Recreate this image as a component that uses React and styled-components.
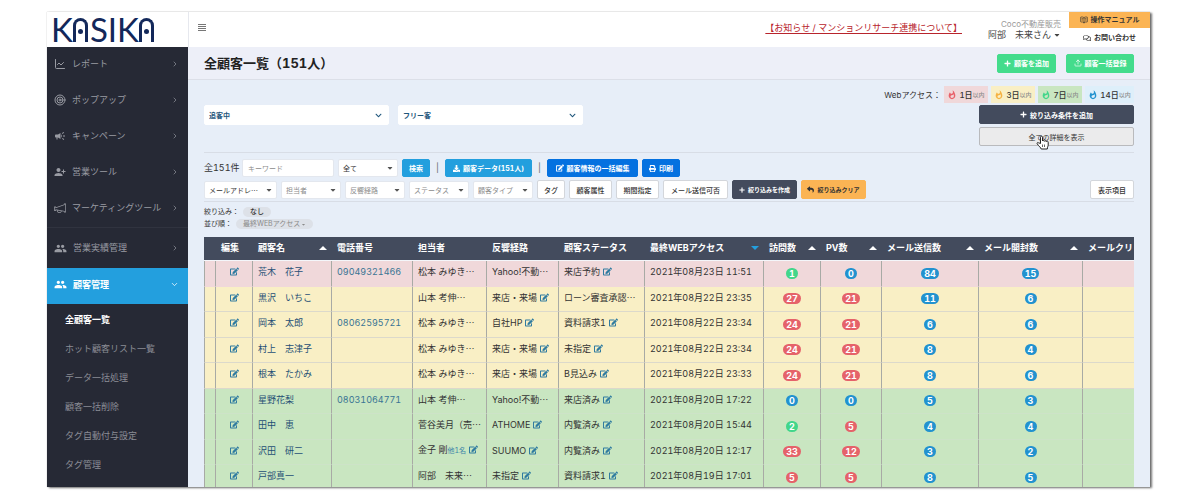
import React from 'react';
import styled, { createGlobalStyle } from 'styled-components';
import {
  FaCaretDown, FaChevronDown, FaDownload, FaEdit, FaPlus,
  FaPrint, FaRegComments, FaReply,
} from 'react-icons/fa';
import { FiChevronDown, FiChevronRight, FiUpload } from 'react-icons/fi';
import { MdCampaign, MdPeople, MdPersonAddAlt1, MdWhatshot } from 'react-icons/md';
import { TfiAnnouncement } from 'react-icons/tfi';
import { BookOpenText, ChartLine, Target } from 'lucide-react';

const GlobalStyle = createGlobalStyle`
  * {
    box-sizing: border-box;
  }
  body {
    margin: 0;
    background: #fff;
    color: #333;
    font-family: Inter, 'Noto Sans CJK JP', sans-serif;
    font-size: 9px;
    font-variant-numeric: tabular-nums;
    line-height: 12px;
  }
  button, input, select {
    font-family: inherit;
    font-variant-numeric: inherit;
    margin: 0;
  }
  a {
    color: inherit;
    text-decoration: none;
  }
  svg {
    flex-shrink: 0;
  }
`;

const Page = styled.div`
  padding: 12px 50px 13px 47px;
`;

const Frame = styled.div`
  display: flex;
  height: calc(100vh - 25px);
  background: #e7eef8;
  box-shadow: 0 0 1px rgba(0, 0, 0, 0.3), 2px 1px 2px rgba(0, 0, 0, 0.55);
`;

const Sidebar = styled.aside`
  width: 141px;
  flex-shrink: 0;
  background: #262935;
`;

const Logo = styled.a`
  display: flex;
  align-items: center;
  height: 35px;
  padding-left: 4px;
  background: #fff;
  color: #13285a;
  font-family: Lato, sans-serif;
  font-size: 33px;
  line-height: 35px;
`;

const Arch = styled.span`
  display: flex;
  justify-content: center;
  align-items: center;
  width: 15px;
  height: 24px;
  margin-right: 2px;
  border: 3px solid #13285a;
  border-bottom: 0;
  border-radius: 8px 8px 0 0;
  &:after {
    content: '';
    width: 5px;
    height: 5px;
    border-radius: 50%;
    background: #13285a;
  }
`;

const NavItem = styled.a`
  display: flex;
  align-items: center;
  gap: 6px;
  height: ${p => p.$tall ? 40 : 36}px;
  padding: 0 9px ${p => p.$tall ? 0 : 3}px 7px;
  background: ${p => p.$active ? '#239fde' : 'transparent'};
  color: ${p => p.$active ? '#fff' : '#999ba3'};
  font-weight: ${p => p.$active ? 700 : 400};
  span {
    flex: 1;
  }
`;

const NavGroup = styled.nav`
  & + & {
    border-top: 1px solid #30333f;
  }
`;

const SubMenu = styled.div`
  padding-top: 1px;
`;

const SubItem = styled.a`
  display: flex;
  align-items: center;
  height: 29px;
  padding-left: 18px;
  color: ${p => p.$current ? '#fff' : '#8b8d96'};
  font-weight: ${p => p.$current ? 700 : 400};
`;

const Main = styled.main`
  flex: 1;
  min-width: 0;
  overflow: hidden;
`;

const TopBar = styled.header`
  display: flex;
  align-items: center;
  height: 35px;
  padding-left: 9px;
  background: #fff;
  border-left: 1px solid #e6e8ee;
`;

const MenuButton = styled.button`
  display: flex;
  padding: 0 0 4px;
  border: 0;
  background: transparent;
`;

const Notice = styled.a`
  margin: 0 26px 0 auto;
  padding-bottom: 4px;
  color: #b8242c;
  text-decoration: underline;
  text-underline-offset: 2px;
`;

const Account = styled.div`
  margin-right: 8px;
  color: #444;
  text-align: right;
  small {
    display: block;
    color: #999;
    font-size: 8px;
    line-height: 10px;
  }
  div {
    display: flex;
    align-items: center;
    gap: 2px;
  }
`;

const HelpLinks = styled.div`
  display: flex;
  flex-direction: column;
  width: 81px;
  height: 35px;
`;

const HelpLink = styled.a`
  display: flex;
  justify-content: center;
  align-items: center;
  gap: 3px;
  height: ${p => p.$filled ? 16 : 19}px;
  background: ${p => p.$filled ? '#fbb454' : 'transparent'};
  font-size: 7px;
  font-weight: 700;
`;

const TitleBar = styled.div`
  display: flex;
  align-items: center;
  gap: 10px;
  height: 33px;
  padding: 0 16px;
  background: #edeff8;
  border-bottom: 1px solid #dcdfe8;
  h1 {
    flex: 1;
    margin: 0;
    color: #222;
    font-size: 13px;
    line-height: 18px;
  }
`;

const tones = {
  green: '#44dc8c',
  sky: '#239fde',
  blue: '#0471e0',
  navy: '#434b5d',
  orange: '#fbb454',
  gray: '#ebebec',
  white: '#fff',
};
const darkText = ['orange', 'gray', 'white'];
const borders = { gray: '#b9babd', white: '#d3d6db' };

const Button = styled.button`
  display: flex;
  position: relative;
  justify-content: center;
  align-items: center;
  gap: 3px;
  width: ${p => p.$width ? `${p.$width}px` : 'auto'};
  height: 19px;
  padding: 0;
  border: 1px solid ${p => borders[p.$tone] || tones[p.$tone]};
  border-radius: 2px;
  background: ${p => tones[p.$tone]};
  color: ${p => darkText.includes(p.$tone) ? '#333' : '#fff'};
  font-size: ${p => p.$small ? 6 : 7}px;
  font-weight: ${p => p.$tone === 'gray' ? 400 : p.$tone === 'white' ? 500 : 700};
  white-space: nowrap;
`;

const Content = styled.div`
  padding: 6px 16px 0;
`;

const AccessRow = styled.div`
  display: flex;
  justify-content: flex-end;
  align-items: center;
  gap: 3px;
  height: 17px;
  font-size: 8px;
`;

const AccessTag = styled.span`
  display: flex;
  align-items: center;
  justify-content: center;
  width: ${p => p.$wide ? 49 : 44}px;
  height: 17px;
  background: ${p => p.$bg};
  font-weight: 500;
  svg {
    margin-right: 2px;
    color: ${p => p.$color};
  }
  small {
    color: #8c8c8c;
    font-size: 6px;
  }
`;

const Conditions = styled.div`
  display: flex;
  gap: 9px;
  padding: 2px 0 6px;
  border-bottom: 1px solid #d8dde6;
`;

const Actions = styled.div`
  display: grid;
  gap: 3px;
  width: 155px;
  margin-left: auto;
`;

const SelectBox = styled.div`
  display: grid;
  align-items: center;
  width: ${p => p.$width}px;
  height: ${p => p.$large ? 20 : 18}px;
  background: #fff;
  border: 1px solid ${p => p.$large ? '#fff' : '#e3e7ee'};
  border-radius: 2px;
  color: ${p => p.$large ? '#1f567c' : p.$muted ? '#8b8b8b' : '#333'};
  select {
    grid-area: 1 / 1;
    width: 100%;
    height: 100%;
    padding: 0 4px;
    appearance: none;
    border: 0;
    background: transparent;
    color: inherit;
    font-family: 'Noto Sans CJK JP', sans-serif;
    font-size: 7px;
    font-weight: ${p => p.$large ? 700 : 400};
  }
  svg {
    grid-area: 1 / 1;
    justify-self: end;
    margin-right: ${p => p.$large ? 6 : 3}px;
    color: ${p => p.$large ? '#1f567c' : '#555'};
    pointer-events: none;
  }
`;

const Tools = styled.div`
  display: grid;
  gap: 3px;
  padding: 6px 0 2px;
  border-bottom: 1px solid #d8dde6;
`;

const ToolRow = styled.div`
  display: flex;
  align-items: center;
  gap: 4px;
  ${Button} {
    height: ${p => p.$short ? 18 : 19}px;
  }
  ${Button}:last-child {
    margin-left: ${p => p.$pushLast ? 'auto' : 0};
  }
`;

const Count = styled.span`
  width: 34px;
  white-space: nowrap;
`;

const Keyword = styled.input`
  width: 92px;
  height: 18px;
  padding: 0 5px;
  border: 1px solid #e3e7ee;
  border-radius: 2px;
  background: #fff;
  font-size: 7px;
  &::placeholder {
    color: #8b8b8b;
  }
`;

const Bar = styled.span`
  width: 7px;
  color: #666;
  text-align: center;
`;

const Summary = styled.dl`
  margin: 0;
  padding: 4px 0 7px;
  font-size: 7px;
  div {
    display: flex;
    align-items: center;
    gap: 4px;
    height: 12px;
  }
`;

const Pill = styled.dd`
  display: flex;
  align-items: center;
  gap: 1px;
  height: 10px;
  margin: 0;
  padding: 0 7px;
  border-radius: 5px;
  background: #dde1e8;
  color: ${p => p.$muted ? '#8b8b8b' : '#333'};
  font-weight: ${p => p.$muted ? 400 : 500};
`;

const TableWrap = styled.div`
  overflow: hidden;
`;

const Table = styled.table`
  width: 100%;
  min-width: 980px;
  table-layout: fixed;
  border-collapse: separate;
  border-spacing: 0;
`;

const Th = styled.th`
  height: 24px;
  padding: 0 5px 2px;
  border-bottom: 1px solid #f4f6fa;
  background: #434b5d;
  color: #fff;
  text-align: left;
  white-space: nowrap;
  div {
    display: flex;
    justify-content: space-between;
    align-items: center;
  }
`;

const Sort = styled.i`
  border: 4px solid transparent;
  border-top-width: ${p => p.$down ? 4 : 0}px;
  border-bottom-width: ${p => p.$down ? 0 : 4}px;
  border-top-color: #239fde;
  border-bottom-color: #fff;
`;

const rowColors = { pink: '#f0d8da', yellow: '#f9efc5', green: '#c9e6c1' };
const lineColors = { pink: '#f0d8da', yellow: '#dcd9cb', green: '#cde3c8' };

const Tr = styled.tr`
  background: ${p => rowColors[p.$tone]};
  td {
    height: 25px;
    border-bottom: 1px solid ${p => lineColors[p.$tone]};
  }
  &:nth-child(odd) td {
    height: 26px;
  }
`;

const Td = styled.td`
  padding: 0 0 3px 5px;
  border-right: 1px solid #a8aaa5;
  white-space: nowrap;
  &:first-child {
    border-left: 1px solid #a8aaa5;
  }
`;

const CenterTd = styled(Td)`
  padding: 0;
  text-align: center;
`;

const EditTd = styled(Td)`
  padding: 0 3px 3px 0;
  text-align: center;
`;

const EditLink = styled.a`
  margin-left: 3px;
  color: #2f7ba0;
  svg {
    vertical-align: -1px;
  }
`;

const RecordLink = styled.a`
  color: ${p => p.$phone ? '#3a7594' : '#1f4f75'};
`;

const Dots = styled.span`
  font-family: 'Noto Sans CJK JP', sans-serif;
`;

const Others = styled.small`
  color: #3a85a8;
  font-size: 7px;
`;

const badgeColors = { green: '#42d68b', blue: '#2292cf', red: '#e5626a' };

const Badge = styled.span`
  display: inline-block;
  min-width: 12px;
  height: 11px;
  padding: 0 3px;
  border-radius: 6px;
  background: ${p => badgeColors[p.$color]};
  color: #fff;
  font-weight: 700;
  line-height: 11px;
`;

// Hand pointer hovering over the details button
const Pointer = styled.svg`
  position: absolute;
  top: 7px;
  left: 56px;
`;

const navItems = [
  [ChartLine, 'レポート'],
  [Target, 'ポップアップ'],
  [MdCampaign, 'キャンペーン'],
  [MdPersonAddAlt1, '営業ツール'],
  [TfiAnnouncement, 'マーケティングツール'],
];

const subItems = ['全顧客一覧', 'ホット顧客リスト一覧', 'データ一括処理', '顧客一括削除', 'タグ自動付与設定', 'タグ管理'];

const accessTags = [
  ['1日', '#f0d8da', '#e8616a'],
  ['3日', '#f9efc5', '#f6b243'],
  ['7日', '#c9e6c1', '#42d68b'],
  ['14日', '#deeffa', '#2292cf'],
];

const columns = [
  { width: 12 },
  { width: 37, label: '編集' },
  { width: 79, label: '顧客名', sort: 'up' },
  { width: 81, label: '電話番号' },
  { width: 74, label: '担当者' },
  { width: 72, label: '反響経路' },
  { width: 86, label: '顧客ステータス' },
  { width: 119, label: '最終WEBアクセス', sort: 'down' },
  { width: 57, label: '訪問数', sort: 'up' },
  { width: 61, label: 'PV数', sort: 'up' },
  { width: 97, label: 'メール送信数', sort: 'up' },
  { width: 104, label: 'メール開封数', sort: 'up' },
  { label: 'メールクリック数' },
];

const customers = [
  { tone: 'pink', name: '荒木　花子', phone: '09049321466', staff: '松本 みゆき…', route: 'Yahoo!不動…', status: '来店予約', date: '2021年08月23日 11:51', visits: 1, pv: 0, sent: 84, opened: 15 },
  { tone: 'yellow', name: '黒沢　いちこ', staff: '山本 考伸…', route: '来店・来場', status: 'ローン審査承認…', date: '2021年08月22日 23:35', visits: 27, pv: 21, sent: 11, opened: 6 },
  { tone: 'yellow', name: '岡本　太郎', phone: '08062595721', staff: '松本 みゆき…', route: '自社HP', status: '資料請求1', date: '2021年08月22日 23:34', visits: 24, pv: 21, sent: 6, opened: 6 },
  { tone: 'yellow', name: '村上　志津子', staff: '松本 みゆき…', route: '来店・来場', status: '未指定', date: '2021年08月22日 23:34', visits: 24, pv: 21, sent: 8, opened: 4 },
  { tone: 'yellow', name: '根本　たかみ', staff: '松本 みゆき…', route: '来店・来場', status: 'B見込み', date: '2021年08月22日 23:33', visits: 24, pv: 21, sent: 8, opened: 6 },
  { tone: 'green', name: '星野花梨', phone: '08031064771', staff: '山本 考伸…', route: 'Yahoo!不動…', status: '来店済み', date: '2021年08月20日 17:22', visits: 0, pv: 0, sent: 5, opened: 3 },
  { tone: 'green', name: '田中　恵', staff: '菅谷美月（売…', route: 'ATHOME', status: '内覧済み', date: '2021年08月20日 15:44', visits: 2, pv: 5, sent: 4, opened: 4 },
  { tone: 'green', name: '沢田　研二', staff: '金子 剛', others: '他1名', route: 'SUUMO', status: '内覧済み', date: '2021年08月20日 12:17', visits: 33, pv: 12, sent: 3, opened: 2 },
  { tone: 'green', name: '戸部真一', staff: '阿部　未来…', route: '未指定', status: '資料請求1', date: '2021年08月19日 17:01', visits: 5, pv: 5, sent: 8, opened: 5 },
];

const countColor = n => {
  if (n === 0) return 'blue';
  return n < 5 ? 'green' : 'red';
};

function Edit({ label }) {
  return <EditLink href="#edit" aria-label={`${label}を編集`}><FaEdit size={9} /></EditLink>;
}

function Clipped({ text }) {
  return text.endsWith('…') ? <>{text.slice(0, -1)}<Dots>…</Dots></> : text;
}

function Select({ label, value, width, large, muted }) {
  return (
    <SelectBox $width={width} $large={large} $muted={muted}>
      <select aria-label={label} defaultValue={value}>
        <option>{value}</option>
      </select>
      {large ? <FaChevronDown size={7} /> : <FaCaretDown size={8} />}
    </SelectBox>
  );
}

function SideMenu() {
  return (
    <Sidebar>
      <Logo href="#top" aria-label="KASIKA">K<Arch />SIK<Arch /></Logo>
      <NavGroup>
        {navItems.map(([Icon, label]) => (
          <NavItem key={label} href="#nav">
            <Icon size={12} />
            <span>{label}</span>
            <FiChevronRight size={8} />
          </NavItem>
        ))}
      </NavGroup>
      <NavGroup>
        <NavItem href="#results" $tall>
          <MdPeople size={13} />
          <span>営業実績管理</span>
          <FiChevronRight size={8} />
        </NavItem>
        <NavItem href="#customers" $active>
          <MdPeople size={13} />
          <span>顧客管理</span>
          <FiChevronDown size={9} />
        </NavItem>
        <SubMenu>
          {subItems.map((label, i) => (
            <SubItem key={label} href="#sub" $current={i === 0}>{label}</SubItem>
          ))}
        </SubMenu>
      </NavGroup>
    </Sidebar>
  );
}

function Header() {
  return (
    <TopBar>
      <MenuButton aria-label="メニュー">
        <svg width="8" height="7" stroke="#777">
          <path d="M0 .5h8M0 2.5h8M0 4.5h8M0 6.5h8" />
        </svg>
      </MenuButton>
      <Notice href="#notice">【お知らせ / マンションリサーチ連携について】</Notice>
      <Account>
        <small>Coco不動産販売</small>
        <div>阿部　未来さん <FaCaretDown size={8} /></div>
      </Account>
      <HelpLinks>
        <HelpLink href="#manual" $filled><BookOpenText size={8} /> 操作マニュアル</HelpLink>
        <HelpLink href="#contact"><FaRegComments size={8} /> お問い合わせ</HelpLink>
      </HelpLinks>
    </TopBar>
  );
}

function Filters() {
  return (
    <Tools>
      <ToolRow $short>
        <Count>全151件</Count>
        <Keyword aria-label="キーワード" placeholder="キーワード" />
        <Select label="検索対象" value="全て" width={60} />
        <Button $tone="sky" $width={28}>検索</Button>
        <Bar>|</Bar>
        <Button $tone="sky" $width={87}><FaDownload size={7} /> 顧客データ(151人)</Button>
        <Bar>|</Bar>
        <Button $tone="blue" $width={91}><FaEdit size={8} /> 顧客情報の一括編集</Button>
        <Button $tone="blue" $width={38}><FaPrint size={7} /> 印刷</Button>
      </ToolRow>
      <ToolRow $pushLast>
        <Select label="メールアドレス" value="メールアドレ…" width={73} />
        <Select label="担当者" value="担当者" width={60} muted />
        <Select label="反響経路" value="反響経路" width={60} muted />
        <Select label="ステータス" value="ステータス" width={60} muted />
        <Select label="顧客タイプ" value="顧客タイプ" width={60} muted />
        <Button $tone="white" $width={28}>タグ</Button>
        <Button $tone="white" $width={43}>顧客属性</Button>
        <Button $tone="white" $width={43}>期間指定</Button>
        <Button $tone="white" $width={65}>メール送信可否</Button>
        <Button $tone="navy" $width={65} $small><FaPlus size={6} /> 絞り込みを作成</Button>
        <Button $tone="orange" $width={65} $small><FaReply size={7} /> 絞り込みクリア</Button>
        <Button $tone="white" $width={44}>表示項目</Button>
      </ToolRow>
    </Tools>
  );
}

function CustomerTable() {
  return (
    <TableWrap>
      <Table>
        <colgroup>
          {columns.map((col, i) => <col key={i} style={{ width: col.width }} />)}
        </colgroup>
        <thead>
          <tr>
            {columns.map((col, i) => (
              <Th key={i}>
                <div>{col.label}{col.sort && <Sort $down={col.sort === 'down'} />}</div>
              </Th>
            ))}
          </tr>
        </thead>
        <tbody>
          {customers.map(c => (
            <Tr key={c.name} $tone={c.tone}>
              <Td />
              <EditTd><Edit label={c.name} /></EditTd>
              <Td><RecordLink href="#customer">{c.name}</RecordLink></Td>
              <Td>{c.phone && <RecordLink href="#tel" $phone>{c.phone}</RecordLink>}</Td>
              <Td>
                <Clipped text={c.staff} />
                {c.others && <><Others>{c.others}</Others><Edit label="担当者" /></>}
              </Td>
              <Td><Clipped text={c.route} />{!c.route.endsWith('…') && <Edit label="反響経路" />}</Td>
              <Td><Clipped text={c.status} />{!c.status.endsWith('…') && <Edit label="顧客ステータス" />}</Td>
              <Td>{c.date}</Td>
              <CenterTd><Badge $color={countColor(c.visits)}>{c.visits}</Badge></CenterTd>
              <CenterTd><Badge $color={countColor(c.pv)}>{c.pv}</Badge></CenterTd>
              <CenterTd><Badge $color="blue">{c.sent}</Badge></CenterTd>
              <CenterTd><Badge $color="blue">{c.opened}</Badge></CenterTd>
              <Td />
            </Tr>
          ))}
        </tbody>
      </Table>
    </TableWrap>
  );
}

export default function App() {
  return (
    <Page>
      <GlobalStyle />
      <Frame>
        <SideMenu />
        <Main>
          <Header />
          <TitleBar>
            <h1>全顧客一覧（151人）</h1>
            <Button $tone="green" $width={59}><FaPlus size={7} /> 顧客を追加</Button>
            <Button $tone="green" $width={68}><FiUpload size={8} /> 顧客一括登録</Button>
          </TitleBar>
          <Content>
            <AccessRow>
              Webアクセス：
              {accessTags.map(([days, bg, color]) => (
                <AccessTag key={days} $bg={bg} $color={color} $wide={days === '14日'}>
                  <MdWhatshot size={10} />{days}<small>以内</small>
                </AccessTag>
              ))}
            </AccessRow>
            <Conditions>
              <Select label="追客状況" value="追客中" width={185} large />
              <Select label="顧客区分" value="フリー客" width={185} large />
              <Actions>
                <Button $tone="navy"><FaPlus size={7} /> 絞り込み条件を追加</Button>
                <Button $tone="gray">
                  全ての詳細を表示
                  <Pointer width="13" height="15" viewBox="0 0 13 15" fill="#fff" stroke="#222" strokeLinejoin="round">
                    <path d="M4.5 8.5V2.2a1 1 0 0 1 2 0V6a1 1 0 0 1 1.9.3 1 1 0 0 1 1.9.4 1 1 0 0 1 1.9.5v3c0 1-.9 1.9-.9 3.8H5.2C4.8 12.5 3 11.5 1.2 8.8c-.5-.9.5-1.7 1.3-1z" />
                    <path d="M6.5 9.5v2.5M8.5 9.5v2.5" strokeWidth="0.7" />
                  </Pointer>
                </Button>
              </Actions>
            </Conditions>
            <Filters />
            <Summary>
              <div>
                <dt>絞り込み：</dt>
                <Pill>なし</Pill>
              </div>
              <div>
                <dt>並び順：</dt>
                <Pill $muted>最終WEBアクセス<FaCaretDown size={5} /></Pill>
              </div>
            </Summary>
            <CustomerTable />
          </Content>
        </Main>
      </Frame>
    </Page>
  );
}
